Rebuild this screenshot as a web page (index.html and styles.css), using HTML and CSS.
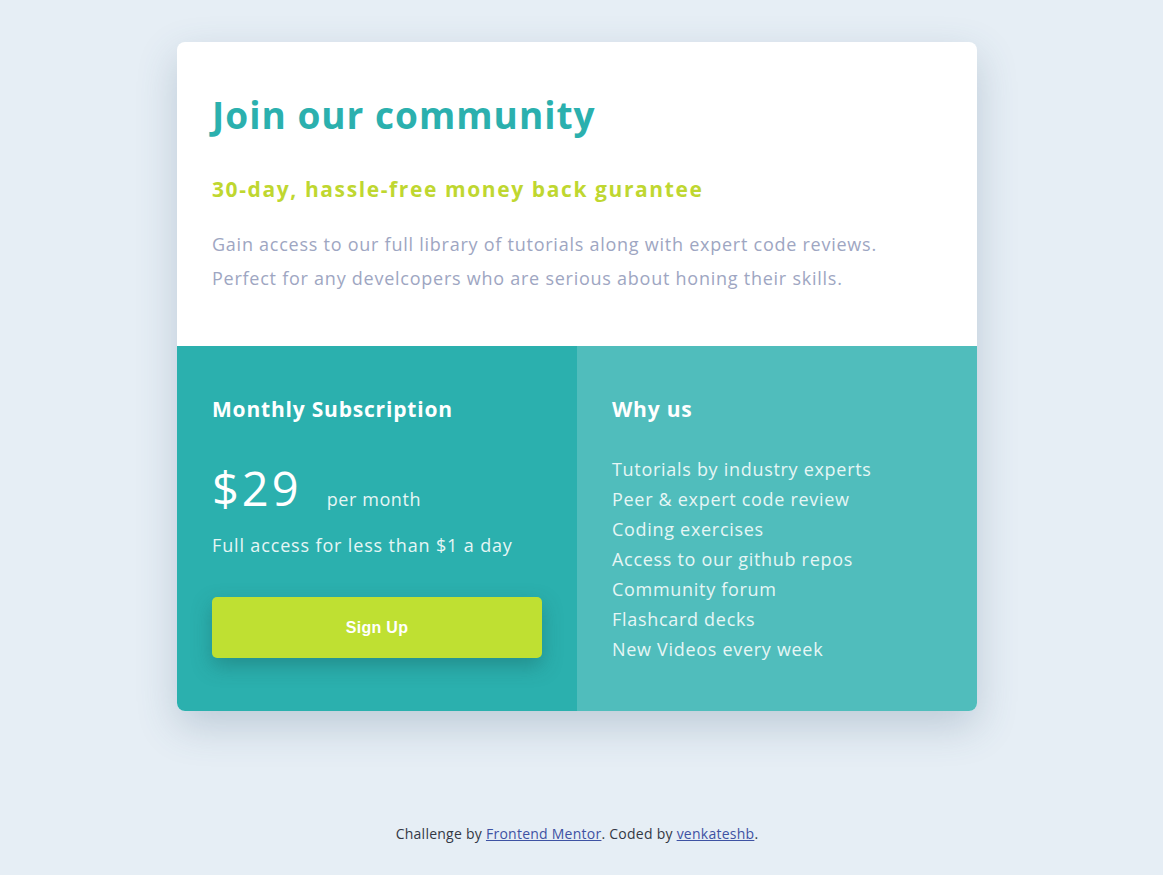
FILE: index.html
```html
<!DOCTYPE html>
<html lang="en">
<head>
<meta charset="utf-8">
<title>Single Price Grid</title>
<link rel="stylesheet" href="styles.css">
</head>
<body>
<main class="page">
  <section class="card">
    <div class="intro">
      <h1 class="title">Join our community</h1>
      <h2 class="subtitle">30-day, hassle-free money back gurantee</h2>
      <p class="desc">Gain access to our full library of tutorials along with expert code reviews.<br>Perfect for any develcopers who are serious about honing their skills.</p>
    </div>
    <div class="bottom">
      <div class="plan">
        <h3 class="panel-title">Monthly Subscription</h3>
        <div class="price-row"><span class="price">$29</span><span class="per">per month</span></div>
        <p class="access">Full access for less than $1 a day</p>
        <button class="signup">Sign Up</button>
      </div>
      <div class="why">
        <h3 class="panel-title">Why us</h3>
        <ul class="reasons">
          <li>Tutorials by industry experts</li>
          <li>Peer &amp; expert code review</li>
          <li>Coding exercises</li>
          <li>Access to our github repos</li>
          <li>Community forum</li>
          <li>Flashcard decks</li>
          <li>New Videos every week</li>
        </ul>
      </div>
    </div>
  </section>
  <footer class="attribution">Challenge by <a href="#">Frontend Mentor</a>. Coded by <a href="#">venkateshb</a>.</footer>
</main>
</body>
</html>
```

FILE: styles.css
```css
* { box-sizing: border-box; }
html, body { margin: 0; padding: 0; }
body {
  background: #e6eef5;
  font-family: "Open Sans", "Noto Sans", sans-serif;
  min-height: 875px;
}
.page {
  display: flex;
  flex-direction: column;
  align-items: center;
  padding: 42px 9px 0 0;
}
.card {
  width: 800px;
  border-radius: 8px;
  overflow: hidden;
  background: #fff;
  box-shadow: 0 15px 40px rgba(60, 90, 120, 0.24);
}
.intro {
  padding: 50px 35px 0 35px;
  height: 304px;
}
.title {
  margin: 0;
  font-size: 37px;
  font-weight: 700;
  color: #2bb0ae;
  line-height: 46px;
  letter-spacing: 1px;
}
.subtitle {
  margin: 36px 0 0;
  font-size: 21px;
  font-weight: 700;
  color: #bfd730;
  line-height: 30px;
  letter-spacing: 1.6px;
}
.desc {
  margin: 23px 0 0;
  font-size: 18px;
  line-height: 34px;
  letter-spacing: 0.75px;
  color: #9ea6c2;
}
.bottom {
  display: grid;
  grid-template-columns: 400px 400px;
  height: 365px;
}
.plan {
  background: #2bb0ae;
  padding: 48px 35px 0;
  color: #fff;
}
.why {
  background: #50bdbc;
  padding: 48px 35px 0;
  color: #fff;
}
.panel-title {
  margin: 0;
  font-size: 21px;
  font-weight: 700;
  line-height: 30px;
  letter-spacing: 0.8px;
}
.price-row {
  display: flex;
  align-items: baseline;
  margin-top: 36px;
  height: 56px;
}
.price {
  font-weight: 400;
  font-size: 47px;
  line-height: 56px;
  letter-spacing: 3px;
}
.per {
  margin-left: 25px;
  font-size: 18px;
  letter-spacing: 0.6px;
  color: #e6f6f5;
}
.access {
  margin: 16px 0 0;
  font-size: 18px;
  line-height: 26px;
  letter-spacing: 0.85px;
  color: #e6f6f5;
}
.signup {
  display: block;
  margin-top: 39px;
  width: 330px;
  height: 61px;
  border: none;
  border-radius: 5px;
  background: #bfe032;
  color: #fff;
  font-family: "Liberation Sans", "Roboto", sans-serif;
  font-weight: 700;
  font-size: 16px;
  letter-spacing: 0.3px;
  box-shadow: 0 8px 20px rgba(20, 80, 80, 0.35);
}
.reasons {
  list-style: none;
  margin: 30px 0 0;
  padding: 0;
  font-size: 18px;
  line-height: 30px;
  letter-spacing: 0.7px;
  color: #e6f6f5;
}
.attribution {
  margin-top: 113px;
  font-size: 14px;
  letter-spacing: 0.25px;
  color: #333844;
}
.attribution a {
  color: #3e52a3;
}
```
